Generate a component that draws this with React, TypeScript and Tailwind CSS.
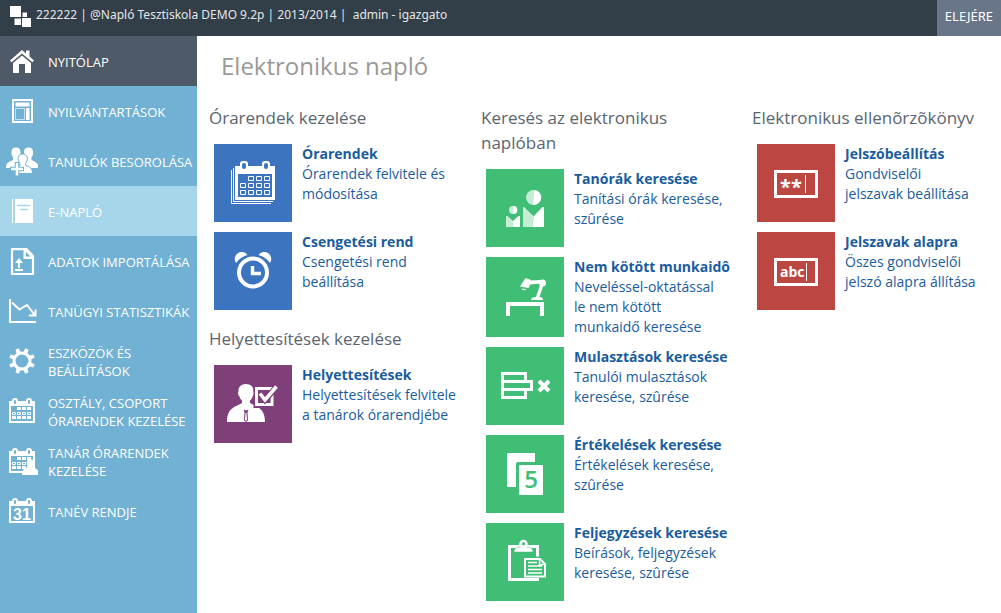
import type { ReactNode } from 'react';
import clsx from 'clsx';

type MenuItem = { label: string; icon: ReactNode; state?: 'home' | 'active' };
type Tile = { title: string; text: string; icon: ReactNode };
type Group = { title: string; color: 'blue' | 'purple' | 'green' | 'red'; tiles: Tile[] };

const tileColors = {
  blue: 'bg-[#3d74c0] text-[#3d74c0]',
  purple: 'bg-[#7f3f78] text-[#7f3f78]',
  green: 'bg-[#40be76] text-[#40be76]',
  red: 'bg-[#bb4642] text-[#bb4642]',
};

const MenuIcon = ({ children }: { children: ReactNode }) => (
  <svg viewBox="0 0 32 32" className="size-8 shrink-0" fill="#fff" aria-hidden="true">{children}</svg>
);

// currentColor is the tile background, used for cut-outs
const TileIcon = ({ children }: { children: ReactNode }) => (
  <svg viewBox="0 0 78 78" className="size-[78px]" fill="#fff" aria-hidden="true">{children}</svg>
);

const CalendarFrame = () => (
  <>
    <path fillRule="evenodd" d="M3 6h26v22H3zM5 11v15h22V11z" />
    <path d="M6 6a3 3 0 0 1 6 0v2a3 3 0 0 1-6 0zM20 6a3 3 0 0 1 6 0v2a3 3 0 0 1-6 0z" />
    <rect x="8" y="5" width="2" height="4" rx="1" fill="#71b1d3" />
    <rect x="22" y="5" width="2" height="4" rx="1" fill="#71b1d3" />
  </>
);

const CalendarCells = () => (
  <>
    <path d="M11 12h4v3h-4zM16 12h4v3h-4zM21 12h4v3h-4zM6 21h4v3H6zM11 21h4v3h-4zM16 21h4v3h-4zM21 21h4v3h-4z" />
    <path d="M6.5 17.5h3v2h-3zM11.5 17.5h3v2h-3zM16.5 17.5h3v2h-3zM21.5 17.5h3v2h-3z" fill="none" stroke="#fff" />
  </>
);

const menu: MenuItem[] = [
  {
    label: 'NYITÓLAP',
    state: 'home',
    icon: (
      <MenuIcon>
        <path d="M16 5 4 15.5l1.600 1.800L16 8.500l10.400 8.800 1.600-1.800-4.500-4V5.500H20v3z" />
        <path d="M16 10.500 7 18v10h6v-9h6v9h6V18z" />
      </MenuIcon>
    ),
  },
  {
    label: 'NYILVÁNTARTÁSOK',
    icon: (
      <MenuIcon>
        <path d="M7 5h19v22H7z" fill="none" stroke="#fff" strokeWidth="2" />
        <path d="M9.500 7.500h14v4h-14zM20 13h3.500v12H20z" />
        <path d="M9.500 13.500h9v11h-9z" fill="none" stroke="#fff" strokeOpacity=".6" />
      </MenuIcon>
    ),
  },
  {
    label: 'TANULÓK BESOROLÁSA',
    icon: (
      <MenuIcon>
        <path d="M10 2.500c3.500 0 4.800 2.500 4.500 5.500-.2 2-1 3-1.500 4v2.500l4 2.500v6H0c0-5.500 3-6 7-8V12C6 11 5.500 10 5.500 8c-.3-3 1-5.500 4.500-5.500zM22.500 2.500C19 2.500 17.700 5 18 8c.2 2 1 3 1.500 4v2.500l-4 2.500v6h17c0-5.500-3-6-7-8V12c1-1 1.500-2 1.500-4 .3-3-1-5.500-4.500-5.500z" />
        <path d="M16.700 9c3.300 0 5 2.500 4.600 5.500-.3 2-1 3-1.800 4v1.800c4 1.700 7 2.200 7 8.200H8.500c0-6 1.500-6.500 5.500-8.200v-1.800c-.9-1-1.600-2-1.800-4C11.800 11.500 13.300 9 16.700 9z" stroke="#71b1d3" />
        <path d="M11 17v14.500M4 24h14" stroke="#71b1d3" strokeWidth="4.500" />
        <path d="M11 18v12.500M5 24h12" stroke="#fff" strokeWidth="2.500" />
      </MenuIcon>
    ),
  },
  {
    label: 'E-NAPLÓ',
    state: 'active',
    icon: (
      <MenuIcon>
        <path d="M6 4h1v24H6zM9 4h18v24H9z" />
        <path d="M11 10.500h13M14 14.500h8" stroke="#a7d6ea" strokeWidth="1.500" />
      </MenuIcon>
    ),
  },
  {
    label: 'ADATOK IMPORTÁLÁSA',
    icon: (
      <MenuIcon>
        <path d="M6 4.200h14.500L27 11v18H6z" fill="none" stroke="#fff" strokeWidth="2.200" />
        <path fillRule="evenodd" d="M17.500 4H21l7 7v3H17.500zM20 7v4.500h4.500z" />
        <path d="m13 13 4 5h-3v5h-2v-5H9zM9 24h8v2H9z" />
      </MenuIcon>
    ),
  },
  {
    label: 'TANÜGYI STATISZTIKÁK',
    icon: (
      <MenuIcon>
        <path d="M4 4v23h26" fill="none" stroke="#fff" strokeWidth="2" />
        <path d="m6 7.500 7.500 7 7.500-4.500 8 10.500M23 20.500h6.500V14.500" fill="none" stroke="#fff" strokeWidth="2" />
      </MenuIcon>
    ),
  },
  {
    label: 'ESZKÖZÖK ÉS\nBEÁLLÍTÁSOK',
    icon: (
      <MenuIcon>
        <circle cx="16" cy="16" r="8" fill="none" stroke="#fff" strokeWidth="3" />
        {[22.5, 67.5, 112.5, 157.5, 202.5, 247.5, 292.5, 337.5].map((a) => (
          <path key={a} d="M13.800 7.500 14.300 3h3.400l.5 4.500z" transform={`rotate(${a} 16 16)`} />
        ))}
      </MenuIcon>
    ),
  },
  {
    label: 'OSZTÁLY, CSOPORT\nÓRARENDEK KEZELÉSE',
    icon: (
      <MenuIcon>
        <CalendarFrame />
        <CalendarCells />
      </MenuIcon>
    ),
  },
  {
    label: 'TANÁR ÓRARENDEK\nKEZELÉSE',
    icon: (
      <MenuIcon>
        <CalendarFrame />
        <CalendarCells />
        <path d="M24 14c3 0 4 2 3.500 5-.2 1.500-.8 2-1 3 3 1.500 6.500 2 6.500 8H16c0-6 3-6.500 6-8-.3-1-1-1.500-1.200-3C20.500 16 21.500 14 24 14z" />
      </MenuIcon>
    ),
  },
  {
    label: 'TANÉV RENDJE',
    icon: (
      <MenuIcon>
        <CalendarFrame />
        <text x="16" y="25" textAnchor="middle" className="font-['Liberation_Sans',sans-serif] text-[16px] font-bold">31</text>
      </MenuIcon>
    ),
  },
];

const columns: Group[][] = [
  [
    {
      title: 'Órarendek kezelése',
      color: 'blue',
      tiles: [
        {
          title: 'Órarendek',
          text: 'Órarendek felvitele és\nmódosítása',
          icon: (
            <TileIcon>
              <path d="M19.500 24v33.500H59M17.500 26v33.500H57" fill="none" stroke="#fff" />
              <path fillRule="evenodd" d="M21 22h40v34H21zM24 30v23h34V30z" />
              <rect x="26" y="17" width="8" height="9" rx="3" />
              <rect x="48" y="17" width="8" height="9" rx="3" />
              <rect x="28" y="19" width="4" height="6" rx="2" fill="currentColor" />
              <rect x="50" y="19" width="4" height="6" rx="2" fill="currentColor" />
              <path
                d="M34.500 32.500h5v4h-5zM42.500 32.500h5v4h-5zM50.500 32.500h5v4h-5zM26.500 39.500h5v4h-5zM34.500 39.500h5v4h-5zM42.500 39.500h5v4h-5zM50.500 39.500h5v4h-5zM26.500 46.500h5v4h-5zM34.500 46.500h5v4h-5zM42.500 46.500h5v4h-5zM50.500 46.500h5v4h-5z"
                fill="none"
                stroke="#fff"
              />
            </TileIcon>
          ),
        },
        {
          title: 'Csengetési rend',
          text: 'Csengetési rend\nbeállítása',
          icon: (
            <TileIcon>
              <circle cx="39" cy="40.500" r="14" fill="none" stroke="#fff" strokeWidth="4" />
              <path d="M38.500 34v7.500H47" fill="none" stroke="#fff" strokeWidth="3.500" />
              <path d="M22 31a6.500 6.500 0 0 1 11.500-8A20 20 0 0 0 22 31zM56 31a6.500 6.500 0 0 0-11.500-8A20 20 0 0 1 56 31z" />
            </TileIcon>
          ),
        },
      ],
    },
    {
      title: 'Helyettesítések kezelése',
      color: 'purple',
      tiles: [
        {
          title: 'Helyettesítések',
          text: 'Helyettesítések felvitele\na tanárok órarendjébe',
          icon: (
            <TileIcon>
              <path d="M32 19c5.500 0 8 3.500 7.500 8 1 1 .3 3.500-.8 4-.5 2-1.500 3.500-2.700 4.500V38c6 4 15 4 15 19H13c0-15 9-15 15-19v-2.500c-1.200-1-2.200-2.500-2.700-4.500-1.100-.5-1.800-3-.8-4-.5-4.500 2-8 7.500-8z" />
              <path d="m29.500 44.500 2.500 1 2.500-1-1 3 .5 8-2 1.500-2-1.500.5-8z" fill="currentColor" />
              <path d="m31.500 48-.5 7 1 1 1-1-.5-7z" />
              <path d="M39.500 20H61v23H39.500z" fill="currentColor" />
              <path d="M42.500 23.500H58v16H42.500z" fill="none" stroke="#fff" strokeWidth="3" />
              <path d="m46 29 5 6 11.500-13" fill="none" stroke="currentColor" strokeWidth="6" />
              <path d="m46 28.500 5 6.500 11.500-13.500" fill="none" stroke="#fff" strokeWidth="3.500" />
            </TileIcon>
          ),
        },
      ],
    },
  ],
  [
    {
      title: 'Keresés az elektronikus\nnaplóban',
      color: 'green',
      tiles: [
        {
          title: 'Tanórák keresése',
          text: 'Tanítási órák keresése,\nszûrése',
          icon: (
            <TileIcon>
              <circle cx="47.500" cy="28.500" r="7.500" fillOpacity=".7" />
              <path d="M48.500 21a7.500 7.500 0 0 1-1.500 15z" />
              <path d="M37 38h1l9.500 9-1 11H37z" fillOpacity=".7" />
              <path d="M58 38h-1.500l-9 9.500L46.500 58H58z" />
              <circle cx="27" cy="41" r="4" fillOpacity=".7" />
              <path d="M27.500 37a4 4 0 0 1-.5 8z" />
              <path d="M20 47h1.500l5.500 5-.5 6H20z" fillOpacity=".7" />
              <path d="M34 47h-1.500L27 52l-.5 6H34z" />
            </TileIcon>
          ),
        },
        {
          title: 'Nem kötött munkaidô',
          text: 'Neveléssel-oktatással\nle nem kötött\nmunkaidő keresése',
          icon: (
            <TileIcon>
              <path d="M22 58V46h34v12" fill="none" stroke="#fff" strokeWidth="4" />
              <path d="M45 42c0-2 2-3 5-3h3.500c2.500 0 3.500 1 3.500 3zM50 39l4-12h3.500L53.500 39z" />
              <path d="m43 22.500 12.500-.5v3.500L44 26.500z" />
              <circle cx="56.500" cy="25" r="3.500" />
              <path d="M34 28.500 39.500 20l5.500 2-.5 3.500-2 4.500z" />
              <path d="M35.500 30.500a3 3 0 0 0 5 .7z" />
            </TileIcon>
          ),
        },
        {
          title: 'Mulasztások keresése',
          text: 'Tanulói mulasztások\nkeresése, szûrése',
          icon: (
            <TileIcon>
              <path d="M16.500 26.500h23v24h-23zM16.500 34.500h29v8h-29" fill="none" stroke="#fff" strokeWidth="3" />
              <path d="M38 36h6v5h-6z" fill="currentColor" />
              <path d="m53 34 10 10m0-10L53 44" fill="none" stroke="#fff" strokeWidth="4" />
            </TileIcon>
          ),
        },
        {
          title: 'Értékelések keresése',
          text: 'Értékelések keresése,\nszûrése',
          icon: (
            <TileIcon>
              <rect x="21" y="18" width="28" height="34" rx="1" />
              <rect x="30" y="27" width="30" height="36" rx="2" fill="currentColor" />
              <rect x="33" y="30" width="24" height="30" rx="1" />
              <text x="45" y="53" textAnchor="middle" fill="currentColor" className="text-[24px] font-semibold">5</text>
            </TileIcon>
          ),
        },
        {
          title: 'Feljegyzések keresése',
          text: 'Beírások, feljegyzések\nkeresése, szûrése',
          icon: (
            <TileIcon>
              <path d="M51.500 34V23.500h-28v33H53" fill="none" stroke="#fff" strokeWidth="3" />
              <path d="M28 29c.5-4 2.500-5 5-5h9c2.500 0 4.500 1 5 5z" stroke="currentColor" strokeWidth=".5" />
              <circle cx="37.500" cy="21" r="3" fill="none" stroke="#fff" strokeWidth="2.500" />
              <path d="M37 33.500h24V55H37z" fill="currentColor" />
              <path d="M39 36h15l5 5v12.500H39z" fill="none" stroke="#fff" strokeWidth="2" />
              <path d="M53.500 36v5.500H59M42 39.500h9M42 43h14M42 46.500h14M42 50h14" fill="none" stroke="#fff" strokeWidth="1.500" />
            </TileIcon>
          ),
        },
      ],
    },
  ],
  [
    {
      title: 'Elektronikus ellenõrzõkönyv',
      color: 'red',
      tiles: [
        {
          title: 'Jelszóbeállítás',
          text: 'Gondviselői\njelszavak beállítása',
          icon: (
            <TileIcon>
              <path d="M18.500 27.500h41v25h-41z" fill="none" stroke="#fff" strokeWidth="3" />
              <text x="23" y="50" className="text-[20px] font-bold">**</text>
              <path d="M48 31h1v18h-1z" />
            </TileIcon>
          ),
        },
        {
          title: 'Jelszavak alapra',
          text: 'Öszes gondviselői\njelszó alapra állítása',
          icon: (
            <TileIcon>
              <path d="M18.500 27.500h41v25h-41z" fill="none" stroke="#fff" strokeWidth="3" />
              <text x="23" y="45" className="text-[14px] font-bold">abc</text>
              <path d="M49 31h1v18h-1z" />
            </TileIcon>
          ),
        },
      ],
    },
  ],
];

const TileLink = ({ tile, color }: { tile: Tile; color: Group['color'] }) => (
  <a href="#" className="flex gap-2.5 text-sm leading-5 text-[#1a5c9e]">
    <span className={clsx('flex w-[78px] shrink-0 items-center', tileColors[color])}>{tile.icon}</span>
    <span className="whitespace-pre">
      <strong className="block font-bold">{tile.title}</strong>
      {tile.text}
    </span>
  </a>
);

export default function App() {
  return (
    <div className="flex min-h-screen flex-col bg-white font-['Open_Sans','Noto_Sans',sans-serif]">
      <header className="flex h-9 items-stretch justify-between bg-[#323e48] font-['Noto_Sans',sans-serif] text-xs text-[#e4e6e8]">
        <div className="flex gap-1 pl-2">
          <svg viewBox="0 0 24 36" className="h-9 w-6" fill="#fff" aria-hidden="true">
            <path d="M2 6h11v11H2zM14.500 12.500h4.500V17h-4.500zM6.500 18.500H13V25H6.500zM14 18h9v9h-9z" />
          </svg>
          <p className="whitespace-pre leading-[30px]">222222 | @Napló Tesztiskola DEMO 9.2p | 2013/2014 |  admin - igazgato</p>
        </div>
        <button type="button" className="bg-[#69768a] px-2 pb-0.5 text-[13px] text-white">ELEJÉRE</button>
      </header>

      <div className="flex flex-1">
        <nav className="w-[197px] shrink-0 bg-[#71b1d3] font-['Open_Sans','Noto_Sans',sans-serif]">
          {menu.map((item) => (
            <a
              key={item.label}
              href="#"
              className={clsx(
                'flex h-[50px] items-center gap-2.5 pl-1.5 text-[13px] leading-[18px] text-white',
                item.state === 'home' && 'bg-[#4f5a68]',
                item.state === 'active' && 'bg-[#a7d6ea]',
              )}
            >
              {item.icon}
              <span className="whitespace-pre pt-px">{item.label}</span>
            </a>
          ))}
        </nav>

        <main className="flex-1 pl-3 pt-3">
          <h1 className="pl-3 text-2xl leading-9 text-[#999]">Elektronikus napló</h1>
          <div className="mt-[21px] grid grid-cols-[272fr_271fr_249fr]">
            {columns.map((groups) => (
              <div key={groups[0].title} className="space-y-4">
                {groups.map((group) => (
                  <section key={group.title}>
                    <h2 className="whitespace-pre text-[17px] leading-[25px] text-[#5a6570]">{group.title}</h2>
                    <div className="mt-3.5 space-y-2.5 pl-[5px]">
                      {group.tiles.map((tile) => (
                        <TileLink key={tile.title} tile={tile} color={group.color} />
                      ))}
                    </div>
                  </section>
                ))}
              </div>
            ))}
          </div>
        </main>
      </div>
    </div>
  );
}
